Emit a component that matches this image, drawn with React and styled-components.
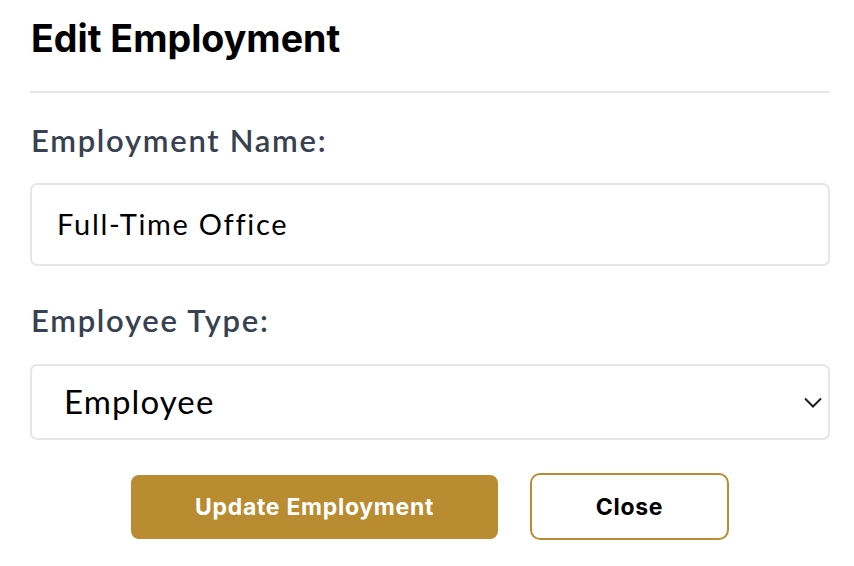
import React from "react";
import styled, { createGlobalStyle } from "styled-components";

const Global = createGlobalStyle`
  html, body { margin: 0; padding: 0; background: #ffffff; }
  * { box-sizing: border-box; }
`;

const Page = styled.div`
  width: 854px;
  padding: 16px 24px 0 30px;
  display: flex;
  flex-direction: column;
`;

const Title = styled.h2`
  margin: 0;
  font-family: Inter, "Liberation Sans", sans-serif;
  font-weight: 700;
  font-size: 37.6px;
  line-height: 46px;
  color: #000000;
  padding-left: 1px;
`;

const Divider = styled.hr`
  margin: 29px 0 0 0;
  border: 0;
  height: 2px;
  background: #e5e5ea;
  width: 800px;
`;

const Form = styled.form`
  display: flex;
  flex-direction: column;
  width: 800px;
`;

const Field = styled.div`
  display: flex;
  flex-direction: column;
  margin-top: ${(p) => p.$top}px;
`;

const Label = styled.label`
  font-family: Lato, "Open Sans", sans-serif;
  font-weight: 600;
  font-size: 31px;
  line-height: 38px;
  letter-spacing: 1.7px;
  color: #374151;
  padding-left: 1px;
`;

const Input = styled.input`
  margin-top: ${(p) => p.$gap}px;
  height: 83px;
  border: 2px solid #e5e5ea;
  border-radius: 7px;
  padding: 0 25px 3px;
  font-family: Lato, "Open Sans", sans-serif;
  font-size: 29px;
  letter-spacing: 1.7px;
  color: #000000;
  outline: none;
  background: #fff;
`;

const SelectWrap = styled.div`
  position: relative;
  margin-top: ${(p) => p.$gap}px;
`;

const Select = styled.select`
  appearance: none;
  width: 100%;
  height: 76px;
  border: 2px solid #e5e5ea;
  border-radius: 7px;
  padding: 0 32px 3px;
  font-family: Lato, "Open Sans", sans-serif;
  font-size: 33px;
  letter-spacing: 1.1px;
  color: #000000;
  background: #fff;
  outline: none;
`;

const Chevron = styled.svg`
  position: absolute;
  right: 8px;
  top: 33px;
  pointer-events: none;
`;

const Actions = styled.div`
  display: flex;
  justify-content: center;
  align-items: center;
  gap: 32px;
  margin-top: 33px;
`;

const Button = styled.button`
  height: ${(p) => (p.$outline ? 67 : 64)}px;
  width: ${(p) => p.$w}px;
  border-radius: ${(p) => (p.$outline ? 10 : 8)}px;
  border: 2px solid #b98c32;
  background: ${(p) => (p.$outline ? "#ffffff" : "#b98c32")};
  color: ${(p) => (p.$outline ? "#000000" : "#ffffff")};
  font-family: Inter, "Liberation Sans", sans-serif;
  font-weight: 700;
  font-size: 23px;
  letter-spacing: 0.7px;
  cursor: pointer;
`;

export default function App() {
  return (
    <>
      <Global />
      <Page>
        <Title>Edit Employment</Title>
        <Divider />
        <Form onSubmit={(e) => e.preventDefault()}>
          <Field $top={28}>
            <Label htmlFor="name">Employment Name:</Label>
            <Input id="name" $gap={24} defaultValue="Full-Time Office" />
          </Field>
          <Field $top={35}>
            <Label htmlFor="type">Employee Type:</Label>
            <SelectWrap $gap={25}>
              <Select id="type" defaultValue="Employee">
                <option>Employee</option>
                <option>Contractor</option>
              </Select>
              <Chevron width="18" height="11" viewBox="0 0 18 11">
                <path d="M1 1.5 L9 9.5 L17 1.5" fill="none" stroke="#1f1f1f" strokeWidth="2" />
              </Chevron>
            </SelectWrap>
          </Field>
          <Actions>
            <Button type="submit" $w={367}>Update Employment</Button>
            <Button type="button" $outline $w={199}>Close</Button>
          </Actions>
        </Form>
      </Page>
    </>
  );
}
